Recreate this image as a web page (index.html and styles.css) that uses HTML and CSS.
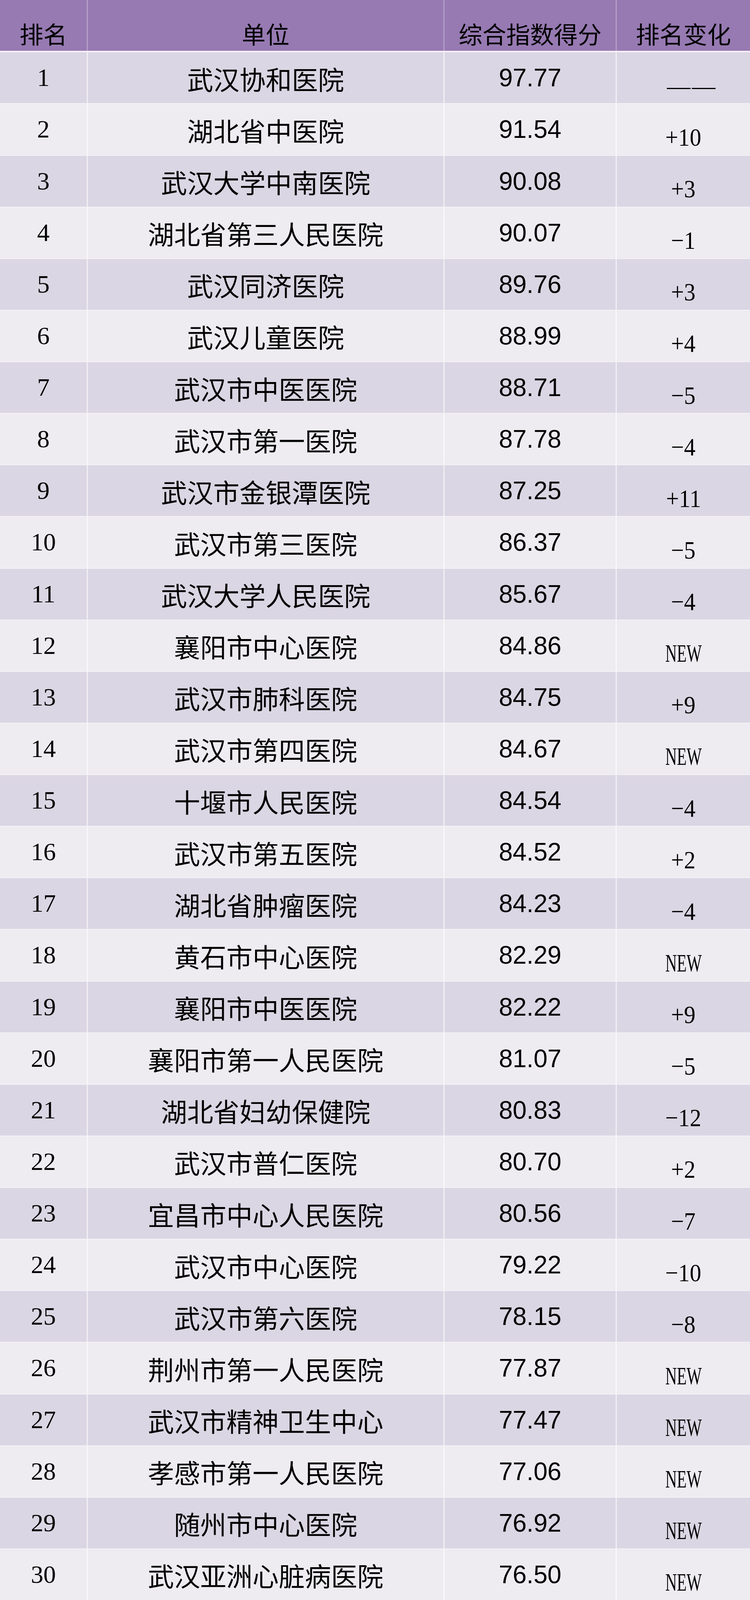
FILE: index.html
```html
<!DOCTYPE html>
<html lang="zh-CN">
<head>
<meta charset="utf-8">
<title>排名</title>
<link rel="stylesheet" href="styles.css">
</head>
<body>
<div class="table">
  <div class="row head">
    <div class="cell c-rank">排名</div>
    <div class="cell c-name">单位</div>
    <div class="cell c-score">综合指数得分</div>
    <div class="cell c-change">排名变化</div>
  </div>
  <div class="body">
    <div class="row"><div class="cell c-rank">1</div><div class="cell c-name">武汉协和医院</div><div class="cell c-score">97.77</div><div class="cell c-change"><span class="dash">——</span></div></div>
    <div class="row"><div class="cell c-rank">2</div><div class="cell c-name">湖北省中医院</div><div class="cell c-score">91.54</div><div class="cell c-change"><span class="num">+10</span></div></div>
    <div class="row"><div class="cell c-rank">3</div><div class="cell c-name">武汉大学中南医院</div><div class="cell c-score">90.08</div><div class="cell c-change"><span class="num">+3</span></div></div>
    <div class="row"><div class="cell c-rank">4</div><div class="cell c-name">湖北省第三人民医院</div><div class="cell c-score">90.07</div><div class="cell c-change"><span class="num">−1</span></div></div>
    <div class="row"><div class="cell c-rank">5</div><div class="cell c-name">武汉同济医院</div><div class="cell c-score">89.76</div><div class="cell c-change"><span class="num">+3</span></div></div>
    <div class="row"><div class="cell c-rank">6</div><div class="cell c-name">武汉儿童医院</div><div class="cell c-score">88.99</div><div class="cell c-change"><span class="num">+4</span></div></div>
    <div class="row"><div class="cell c-rank">7</div><div class="cell c-name">武汉市中医医院</div><div class="cell c-score">88.71</div><div class="cell c-change"><span class="num">−5</span></div></div>
    <div class="row"><div class="cell c-rank">8</div><div class="cell c-name">武汉市第一医院</div><div class="cell c-score">87.78</div><div class="cell c-change"><span class="num">−4</span></div></div>
    <div class="row"><div class="cell c-rank">9</div><div class="cell c-name">武汉市金银潭医院</div><div class="cell c-score">87.25</div><div class="cell c-change"><span class="num">+11</span></div></div>
    <div class="row"><div class="cell c-rank">10</div><div class="cell c-name">武汉市第三医院</div><div class="cell c-score">86.37</div><div class="cell c-change"><span class="num">−5</span></div></div>
    <div class="row"><div class="cell c-rank">11</div><div class="cell c-name">武汉大学人民医院</div><div class="cell c-score">85.67</div><div class="cell c-change"><span class="num">−4</span></div></div>
    <div class="row"><div class="cell c-rank">12</div><div class="cell c-name">襄阳市中心医院</div><div class="cell c-score">84.86</div><div class="cell c-change"><span class="new">NEW</span></div></div>
    <div class="row"><div class="cell c-rank">13</div><div class="cell c-name">武汉市肺科医院</div><div class="cell c-score">84.75</div><div class="cell c-change"><span class="num">+9</span></div></div>
    <div class="row"><div class="cell c-rank">14</div><div class="cell c-name">武汉市第四医院</div><div class="cell c-score">84.67</div><div class="cell c-change"><span class="new">NEW</span></div></div>
    <div class="row"><div class="cell c-rank">15</div><div class="cell c-name">十堰市人民医院</div><div class="cell c-score">84.54</div><div class="cell c-change"><span class="num">−4</span></div></div>
    <div class="row"><div class="cell c-rank">16</div><div class="cell c-name">武汉市第五医院</div><div class="cell c-score">84.52</div><div class="cell c-change"><span class="num">+2</span></div></div>
    <div class="row"><div class="cell c-rank">17</div><div class="cell c-name">湖北省肿瘤医院</div><div class="cell c-score">84.23</div><div class="cell c-change"><span class="num">−4</span></div></div>
    <div class="row"><div class="cell c-rank">18</div><div class="cell c-name">黄石市中心医院</div><div class="cell c-score">82.29</div><div class="cell c-change"><span class="new">NEW</span></div></div>
    <div class="row"><div class="cell c-rank">19</div><div class="cell c-name">襄阳市中医医院</div><div class="cell c-score">82.22</div><div class="cell c-change"><span class="num">+9</span></div></div>
    <div class="row"><div class="cell c-rank">20</div><div class="cell c-name">襄阳市第一人民医院</div><div class="cell c-score">81.07</div><div class="cell c-change"><span class="num">−5</span></div></div>
    <div class="row"><div class="cell c-rank">21</div><div class="cell c-name">湖北省妇幼保健院</div><div class="cell c-score">80.83</div><div class="cell c-change"><span class="num">−12</span></div></div>
    <div class="row"><div class="cell c-rank">22</div><div class="cell c-name">武汉市普仁医院</div><div class="cell c-score">80.70</div><div class="cell c-change"><span class="num">+2</span></div></div>
    <div class="row"><div class="cell c-rank">23</div><div class="cell c-name">宜昌市中心人民医院</div><div class="cell c-score">80.56</div><div class="cell c-change"><span class="num">−7</span></div></div>
    <div class="row"><div class="cell c-rank">24</div><div class="cell c-name">武汉市中心医院</div><div class="cell c-score">79.22</div><div class="cell c-change"><span class="num">−10</span></div></div>
    <div class="row"><div class="cell c-rank">25</div><div class="cell c-name">武汉市第六医院</div><div class="cell c-score">78.15</div><div class="cell c-change"><span class="num">−8</span></div></div>
    <div class="row"><div class="cell c-rank">26</div><div class="cell c-name">荆州市第一人民医院</div><div class="cell c-score">77.87</div><div class="cell c-change"><span class="new">NEW</span></div></div>
    <div class="row"><div class="cell c-rank">27</div><div class="cell c-name">武汉市精神卫生中心</div><div class="cell c-score">77.47</div><div class="cell c-change"><span class="new">NEW</span></div></div>
    <div class="row"><div class="cell c-rank">28</div><div class="cell c-name">孝感市第一人民医院</div><div class="cell c-score">77.06</div><div class="cell c-change"><span class="new">NEW</span></div></div>
    <div class="row"><div class="cell c-rank">29</div><div class="cell c-name">随州市中心医院</div><div class="cell c-score">76.92</div><div class="cell c-change"><span class="new">NEW</span></div></div>
    <div class="row"><div class="cell c-rank">30</div><div class="cell c-name">武汉亚洲心脏病医院</div><div class="cell c-score">76.50</div><div class="cell c-change"><span class="new">NEW</span></div></div>
  </div>
</div>
</body>
</html>
```

FILE: styles.css
```css
html, body {
  margin: 0;
  padding: 0;
  background: #eeecf1;
  overflow: hidden;
}

.table {
  width: 1920px;
  height: 100vh;
  display: flex;
  flex-direction: column;
  color: #000;
}

.row {
  display: grid;
  grid-template-columns: 222px 913px 441px 344px;
}

.head {
  flex: 0 0 3.18vh;
  background: #977ab2;
  border-bottom: 4px solid #f7eefa;
}

.body {
  flex: 1 1 0;
  min-height: 0;
  display: flex;
  flex-direction: column;
}

.body .row {
  flex: 1 1 0;
  min-height: 0;
  border-top: 2px solid #f4f2f7;
  background: #eeecf1;
}

.body .row:first-child {
  border-top: 0;
}

.body .row:nth-child(odd) {
  background: #dbd6e3;
}

.cell {
  display: flex;
  align-items: center;
  justify-content: center;
  line-height: 1;
  white-space: nowrap;
  box-sizing: border-box;
  min-height: 0;
}

.cell + .cell {
  border-left: 3px solid rgba(255, 255, 255, 0.6);
}

.head .cell + .cell {
  border-left: 3px solid rgba(255, 255, 255, 0.28);
}

.head .cell {
  font-family: "Noto Sans CJK SC", sans-serif;
  font-size: 61px;
  font-weight: 400;
  padding-top: 1vh;
}

.body .c-rank {
  font-family: "Liberation Serif", serif;
  font-size: 64px;
}

.body .c-name {
  font-family: "Noto Sans CJK SC", sans-serif;
  font-size: 67px;
  padding-top: 2px;
}

.body .c-score {
  font-family: "Liberation Sans", sans-serif;
  font-size: 64px;
}

.body .c-change {
  font-family: "Liberation Serif", serif;
  font-size: 64px;
  padding-top: 1vh;
}

.num {
  display: inline-block;
  transform: scaleX(0.92);
}

.new {
  display: inline-block;
  transform: scaleX(0.64);
}

.dash {
  display: inline-block;
  font-size: 60px;
  letter-spacing: 4px;
  margin-left: 44px;
}
```
